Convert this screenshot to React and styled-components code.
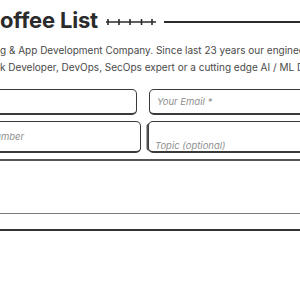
import React from 'react';
import styled, { createGlobalStyle } from 'styled-components';

const GlobalStyle = createGlobalStyle`
  html, body {
    margin: 0;
    padding: 0;
    background: #ffffff;
    overflow: hidden;
  }
  body {
    font-family: Inter, "Liberation Sans", sans-serif;
    color: #2b2b2b;
  }
`;

export default function App() {
  return (
    <>
      <GlobalStyle />
      <Page>
        <Header>
          <Title>Coffee List</Title>
          <Ticks width="52" height="8" viewBox="0 0 52 8">
            <line x1="1" y1="4" x2="51" y2="4" stroke="#2b2b2b" strokeWidth="1.6" />
            {[3, 14, 25, 36.5, 47].map(x => (
              <line key={x} x1={x} y1="1" x2={x} y2="7" stroke="#2b2b2b" strokeWidth="1.6" />
            ))}
          </Ticks>
          <Rule />
        </Header>

        <Intro>
          g &amp; App Development Company. Since last 23 years our engineers
          <br />
          k Developer, DevOps, SecOps expert or a cutting edge AI / ML Developer
        </Intro>

        <Form>
          <Row gap={12} leftWidth={137}>
            <Field height={26} />
            <Field height={26} placeholder="Your Email *" />
          </Row>
          <Row gap={7} leftWidth={141}>
            <Field height={32} placeholder="Phone Number" indent={-21} />
            <Field height={32} placeholder="Topic (optional)" lowered divider />
          </Row>
          <Message />
          <Footer />
        </Form>
      </Page>
    </>
  );
}

const Page = styled.div`
  width: 340px;
  padding-top: 6px;
`;

const Header = styled.div`
  display: flex;
  align-items: center;
  height: 28px;
`;

const Title = styled.h2`
  margin: 0 0 0 -16px;
  font-size: 22px;
  font-weight: 700;
  letter-spacing: -0.2px;
  color: #2b2b2b;
  white-space: nowrap;
`;

const Ticks = styled.svg`
  flex-shrink: 0;
  margin-left: 7px;
  margin-top: 4px;
`;

const Rule = styled.div`
  flex: 1;
  height: 2px;
  margin-left: 7px;
  margin-top: 4px;
  background: #2b2b2b;
`;

const Intro = styled.p`
  margin: 8px 0 0 0;
  font-size: 10px;
  line-height: 17px;
  color: #4a4a4a;
  white-space: nowrap;
  overflow: hidden;
`;

const Form = styled.div`
  margin: 13px 0 0 -30px;
  width: 370px;
  display: flex;
  flex-direction: column;
`;

const Row = styled.div`
  display: grid;
  grid-template-columns: ${({ leftWidth }) => leftWidth + 30}px 1fr;
  column-gap: ${({ gap }) => gap}px;
  margin-bottom: 6px;
`;

const Field = styled.input`
  box-sizing: border-box;
  height: ${({ height }) => height}px;
  width: 100%;
  border: 1.5px solid #3a3a3a;
  border-bottom-width: 2px;
  border-radius: 5px;
  padding: ${({ lowered }) => (lowered ? '18px 0 0 6px' : '0 0 0 7px')};
  text-indent: ${({ indent }) => indent || 0}px;
  font-family: Inter, "Liberation Sans", sans-serif;
  font-size: 9.5px;
  font-style: italic;
  background: #fff;
  box-shadow: ${({ divider }) => (divider ? '-4px 0 0 -2.5px #555' : 'none')};
  outline: none;

  &::placeholder {
    color: #8f8f8f;
  }
`;

const Message = styled.div`
  box-sizing: border-box;
  height: 55px;
  border-top: 2px solid #555;
  border-bottom: 1.5px solid #7a7a7a;
`;

const Footer = styled.div`
  margin-top: 15px;
  height: 2px;
  background: #333;
`;
